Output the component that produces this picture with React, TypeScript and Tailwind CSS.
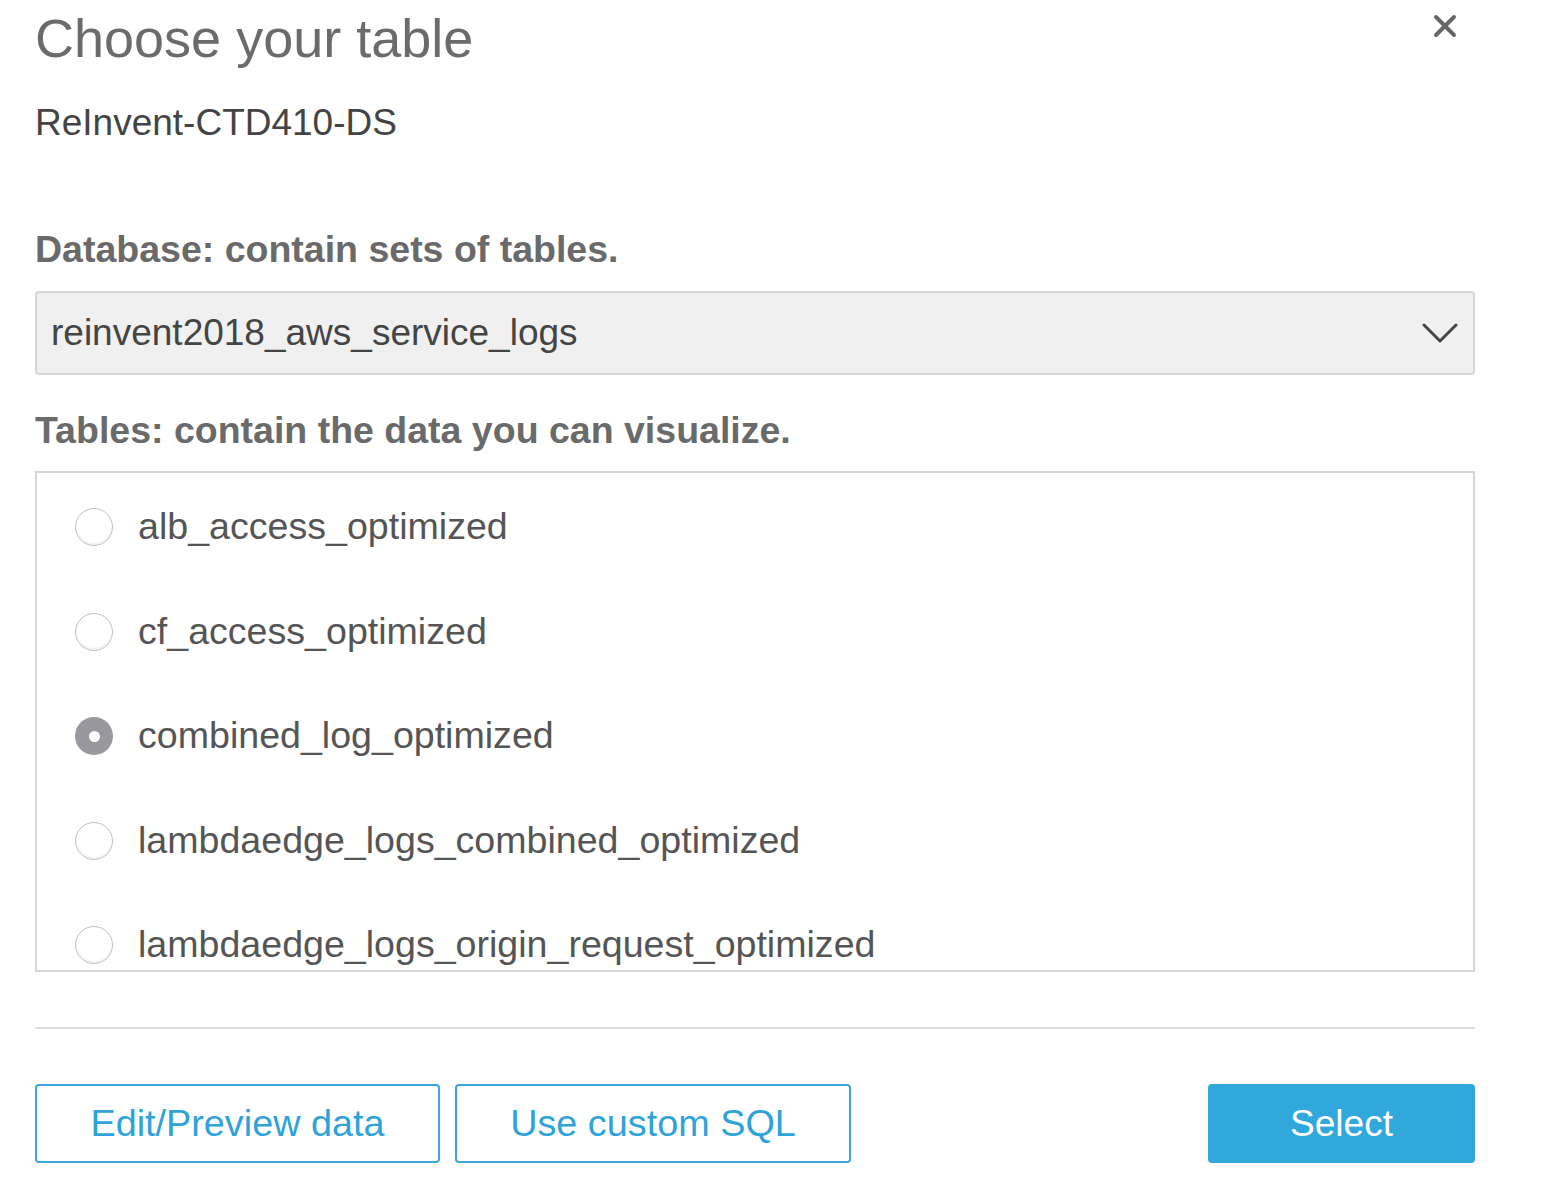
import { X } from "lucide-react";

const tables = [
  "alb_access_optimized",
  "cf_access_optimized",
  "combined_log_optimized",
  "lambdaedge_logs_combined_optimized",
  "lambdaedge_logs_origin_request_optimized",
];

function Radio({ checked }: { checked: boolean }) {
  if (checked) {
    return (
      <span className="flex h-[38px] w-[38px] shrink-0 items-center justify-center rounded-full bg-[#98989e]">
        <span className="h-[11px] w-[11px] rounded-full bg-white" />
      </span>
    );
  }
  return (
    <span className="h-[38px] w-[38px] shrink-0 rounded-full border-[1.5px] border-[#c2c2c2] bg-white shadow-[inset_0_-2px_2px_rgba(0,0,0,0.06)]" />
  );
}

export default function App() {
  const selected = "combined_log_optimized";

  return (
    <div className="min-h-[1198px] w-full bg-white font-['Liberation_Sans',Arial,sans-serif]">
      <div className="pl-[35px] pr-[87px]">
        {/* Header */}
        <div className="flex items-start justify-between">
          <h1 className="mt-[11px] text-[54px] leading-none font-normal text-[#6b6b6b]">
            Choose your table
          </h1>
          <button className="mr-[12px] mt-[8px] text-[#666]">
            <X className="h-[36px] w-[36px]" strokeWidth={2.6} />
          </button>
        </div>
        <div className="mt-[39px] text-[37px] leading-none text-[#444]">ReInvent-CTD410-DS</div>

        {/* Database */}
        <div className="mt-[90px] text-[37.5px] leading-none font-bold text-[#6a6a6a]">
          Database: contain sets of tables.
        </div>
        <div className="mt-[22px] flex h-[84px] items-center justify-between rounded-[4px] border-2 border-[#d6d6d6] bg-[#f0f0f0] pl-[14px] pr-[15px]">
          <span className="text-[37px] leading-none text-[#444]">reinvent2018_aws_service_logs</span>
          <svg width="36" height="22" viewBox="0 0 36 22" fill="none">
            <path d="M2 3 L18 19 L34 3" stroke="#444" strokeWidth="3" strokeLinecap="round" strokeLinejoin="round" />
          </svg>
        </div>

        {/* Tables */}
        <div className="mt-[37px] text-[37.5px] leading-none font-bold text-[#6a6a6a]">
          Tables: contain the data you can visualize.
        </div>
        <div className="mt-[22px] h-[501px] overflow-hidden border-2 border-[#d6d6d6] bg-white pt-[2px]">
          {tables.map((t) => (
            <label key={t} className="flex h-[104.5px] shrink-0 items-center gap-[25px] pl-[38px]">
              <Radio checked={t === selected} />
              <span className="text-[37.6px] leading-none text-[#555]">{t}</span>
            </label>
          ))}
        </div>

        <div className="mt-[55px] h-[2px] bg-[#dedede]" />

        {/* Actions */}
        <div className="mt-[55px] flex h-[79px] gap-[15px]">
          <button className="w-[405px] rounded-[4px] border-2 border-[#3aa8dc] bg-white text-[37.8px] leading-none text-[#2fa3d9]">
            Edit/Preview data
          </button>
          <button className="w-[396px] rounded-[4px] border-2 border-[#3aa8dc] bg-white text-[37.8px] leading-none text-[#2fa3d9]">
            Use custom SQL
          </button>
          <button className="ml-auto w-[267px] rounded-[4px] bg-[#31a8db] text-[37px] leading-none text-white">
            Select
          </button>
        </div>
      </div>
    </div>
  );
}
